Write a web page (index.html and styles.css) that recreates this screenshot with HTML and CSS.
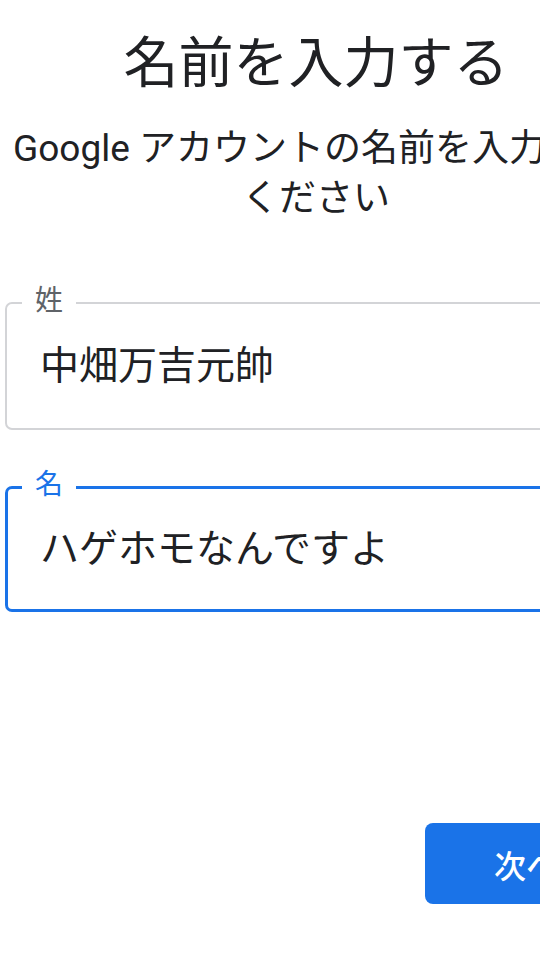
FILE: index.html
```html
<!DOCTYPE html>
<html lang="ja">
<head>
<meta charset="utf-8">
<title>名前を入力する</title>
<link rel="stylesheet" href="styles.css">
</head>
<body>
<main class="page">
  <h1 class="title">名前を入力する</h1>
  <p class="subtitle">Google アカウントの名前を入力してください</p>
  <div class="fields">
    <div class="field">
      <span class="field-label">姓</span>
      <span class="field-value">中畑万吉元帥</span>
    </div>
    <div class="field field-focused">
      <span class="field-label">名</span>
      <span class="field-value">ハゲホモなんですよ</span>
    </div>
  </div>
  <div class="actions">
    <button class="next-btn" type="button">次へ</button>
  </div>
</main>
</body>
</html>
```

FILE: styles.css
```css
html, body {
  margin: 0;
  padding: 0;
  background: #ffffff;
  overflow: hidden;
}

body {
  width: 540px;
  height: 960px;
  font-family: Roboto, "Noto Sans CJK JP", sans-serif;
  color: #202124;
}

.page {
  width: 622px;
  margin-left: 5px;
  padding-top: 28px;
  display: flex;
  flex-direction: column;
}

.title {
  margin: 0;
  font-size: 55px;
  font-weight: 400;
  line-height: 70px;
  text-align: center;
}

.subtitle {
  margin: 26px 0 0;
  font-size: 37px;
  line-height: 50px;
  text-align: center;
}

.fields {
  margin-top: 78px;
  display: flex;
  flex-direction: column;
  gap: 56px;
}

.field {
  position: relative;
  box-sizing: border-box;
  height: 128px;
  border: 2px solid #d3d4d7;
  border-radius: 7px;
  padding-left: 33px;
  display: flex;
  align-items: center;
}

.field-focused {
  height: 126px;
  border: 3px solid #1a73e8;
  padding-left: 32px;
}

.field-label {
  position: absolute;
  left: 15px;
  top: -17px;
  padding: 0 13px;
  background: #ffffff;
  font-size: 28px;
  line-height: 27px;
  color: #5f6368;
}

.field-focused .field-label {
  left: 14px;
  top: -18px;
  color: #1a73e8;
}

.field-value {
  font-size: 39px;
  line-height: 50px;
  color: #202124;
}

.actions {
  margin-top: 211px;
  display: flex;
  justify-content: flex-end;
}

.next-btn {
  width: 202px;
  height: 81px;
  border: none;
  border-radius: 8px;
  background: #1a73e8;
  color: #ffffff;
  font-family: Roboto, "Noto Sans CJK JP", sans-serif;
  font-size: 32px;
  font-weight: 500;
  padding: 0;
}
```
